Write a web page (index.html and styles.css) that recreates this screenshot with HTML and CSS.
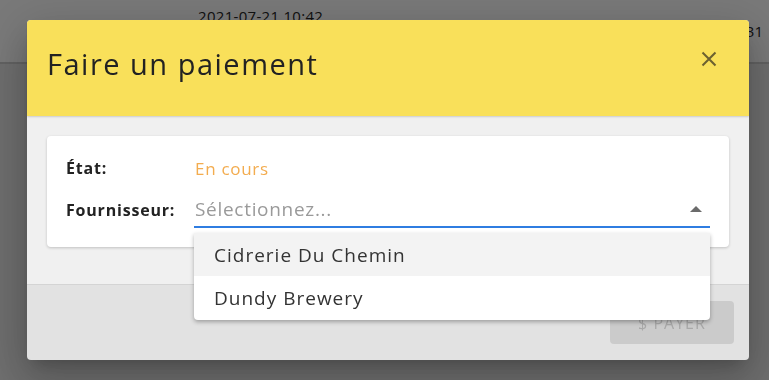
FILE: index.html
```html
<!DOCTYPE html>
<html lang="fr">
<head>
  <meta charset="UTF-8">
  <meta name="viewport" content="width=device-width, initial-scale=1.0">
  <title>Faire un paiement</title>
  <link rel="stylesheet" href="styles.css">
</head>
<body>

  <!-- Page behind the dialog -->
  <div class="page">
    <div class="table-row">
      <span class="cell-date">2021-07-21 10:42</span>
      <span class="cell-amount">1 245,31</span>
    </div>
  </div>

  <!-- Dialog -->
  <div class="backdrop">
    <div class="modal">
      <div class="modal-header">
        <h2>Faire un paiement</h2>
        <button class="close-btn" aria-label="Fermer">
          <svg width="16" height="16" viewBox="0 0 16 16">
            <path d="M1.5 1.5 L14.5 14.5 M14.5 1.5 L1.5 14.5" stroke="currentColor" stroke-width="2" fill="none"/>
          </svg>
        </button>
      </div>

      <div class="modal-body">
        <div class="card">
          <div class="field-row">
            <span class="label">État:</span>
            <span class="status">En cours</span>
          </div>
          <div class="field-row">
            <span class="label">Fournisseur:</span>
            <div class="select">
              <span class="placeholder">Sélectionnez...</span>
              <span class="arrow"></span>
              <ul class="dropdown">
                <li class="hovered">Cidrerie Du Chemin</li>
                <li>Dundy Brewery</li>
              </ul>
            </div>
          </div>
        </div>
      </div>

      <div class="modal-footer">
        <button class="pay-btn" disabled>$ PAYER</button>
      </div>
    </div>
  </div>

</body>
</html>
```

FILE: styles.css
```css
body {
  font-family: "Open Sans", "DejaVu Sans", sans-serif;
  margin: 0;
  background-color: #dcdcdc;
  height: 100vh;
  overflow: hidden;
}

.page {
  background-color: #dcdcdc;
}

.table-row {
  display: flex;
  height: 62px;
  border-bottom: 2px solid #c4c4c4;
  background-color: #f2f2f2;
  font-size: 15px;
  color: #222;
}

.cell-date {
  margin-left: 198px;
  margin-top: 6px;
  letter-spacing: 0.3px;
}

.cell-amount {
  margin-left: auto;
  margin-right: 6px;
  margin-top: 21px;
}

.backdrop {
  position: fixed;
  inset: 0;
  background-color: rgba(0, 0, 0, 0.5);
}

.modal {
  position: absolute;
  left: 27px;
  top: 20px;
  width: 722px;
  height: 338px;
  display: flex;
  flex-direction: column;
  border-radius: 4px;
  background-color: #f0f0f0;
  box-shadow: 0 11px 15px -7px rgba(0, 0, 0, 0.2), 0 24px 38px 3px rgba(0, 0, 0, 0.14), 0 9px 46px 8px rgba(0, 0, 0, 0.12);
}

.modal-header {
  flex-shrink: 0;
  height: 96px;
  display: flex;
  align-items: center;
  justify-content: space-between;
  padding: 0 32px 10px 20px;
  box-sizing: border-box;
  background-color: #f9e05a;
  border-radius: 4px 4px 0 0;
  box-shadow: 0 1px 2px rgba(0, 0, 0, 0.15);
}

.modal-header h2 {
  margin: 0;
  font-weight: 400;
  font-size: 29px;
  color: #222;
  letter-spacing: 1.5px;
}

.close-btn {
  border: none;
  background: none;
  padding: 0;
  margin-bottom: 8px;
  color: #6c6130;
  display: flex;
  cursor: pointer;
}

.modal-body {
  flex-shrink: 0;
  padding: 20px 20px 37px;
  border-bottom: 1px solid #d4d4d4;
}

.card {
  background-color: #fff;
  border-radius: 4px;
  box-shadow: 0 1px 3px rgba(0, 0, 0, 0.2);
  padding: 22px 19px 19px;
  display: flex;
  flex-direction: column;
  gap: 14px;
}

.field-row {
  display: flex;
  align-items: center;
  height: 20px;
}

.field-row:last-child {
  height: 36px;
}

.label {
  width: 128px;
  font-weight: 700;
  font-size: 16px;
  letter-spacing: 0.8px;
  color: #222;
}

.status {
  font-size: 17px;
  letter-spacing: 0.7px;
  color: #f3ac4f;
  padding-left: 1px;
}

.select {
  position: relative;
  flex: 1;
  display: flex;
  align-items: center;
  justify-content: space-between;
  height: 34px;
  border-bottom: 2px solid #2f7de1;
}

.placeholder {
  font-size: 19px;
  letter-spacing: 0.7px;
  color: #9a9a9a;
  padding-left: 1px;
}

.arrow {
  width: 0;
  height: 0;
  border-left: 6px solid transparent;
  border-right: 6px solid transparent;
  border-bottom: 6px solid #6b6b6b;
  margin-right: 8px;
}

.dropdown {
  position: absolute;
  left: 0;
  right: 0;
  top: 41px;
  margin: 0;
  padding: 0 0 1px;
  list-style: none;
  background-color: #fff;
  border-radius: 0 0 4px 4px;
  box-shadow: 0 2px 4px rgba(0, 0, 0, 0.3);
  z-index: 2;
}

.dropdown li {
  height: 43px;
  display: flex;
  align-items: center;
  padding-left: 20px;
  font-size: 19px;
  letter-spacing: 1px;
  color: #333;
}

.dropdown li.hovered {
  background-color: #f3f3f3;
}

.modal-footer {
  flex: 1;
  display: flex;
  justify-content: flex-end;
  align-items: flex-start;
  padding: 16px 15px;
  background-color: #e2e2e2;
  border-radius: 0 0 4px 4px;
}

.pay-btn {
  width: 124px;
  height: 43px;
  border: none;
  border-radius: 4px;
  background-color: #cbcbcb;
  color: #a8a8a8;
  font-family: inherit;
  font-size: 16px;
  letter-spacing: 1px;
}
```
